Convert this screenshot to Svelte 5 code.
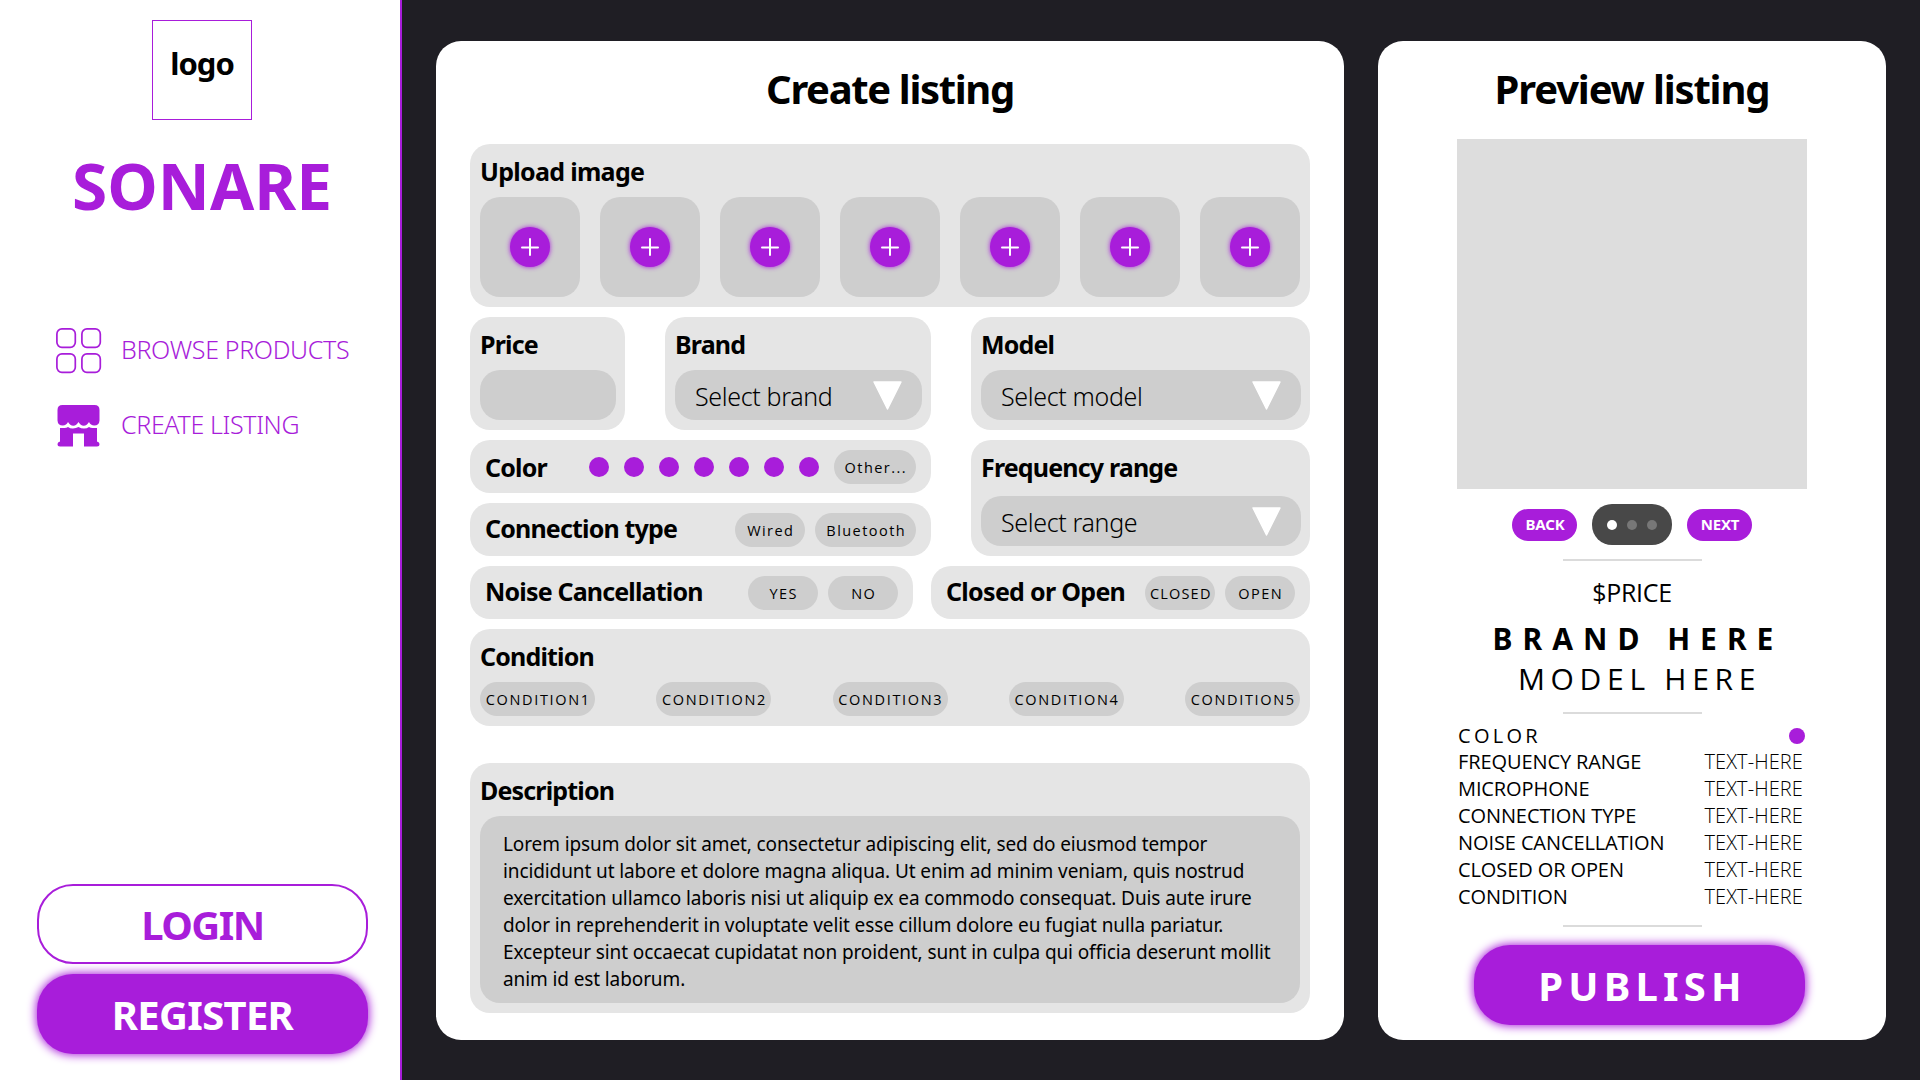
<script>
  const uploads = [1, 2, 3, 4, 5, 6, 7];
  const colors = [1, 2, 3, 4, 5, 6, 7];
  const conditions = ['CONDITION1', 'CONDITION2', 'CONDITION3', 'CONDITION4', 'CONDITION5'];
  const specs = ['FREQUENCY RANGE', 'MICROPHONE', 'CONNECTION TYPE', 'NOISE CANCELLATION', 'CLOSED OR OPEN', 'CONDITION'];
</script>

{#snippet select(text)}
  <div class="field select">
    <span>{text}</span>
    <svg width="29" height="29" viewBox="0 0 29 29"><path d="M1 1H28L14.5 28Z" fill="#fff" stroke="#fff" stroke-width="1.4" stroke-linejoin="round" /></svg>
  </div>
{/snippet}

<div class="page">
  <aside>
    <div class="logo">logo</div>
    <div class="brand-name">SONARE</div>
    <nav>
      <a class="browse" href="#browse">
        <svg width="46" height="46" viewBox="0 0 46 46" fill="none" stroke="#a81dda" stroke-width="1.7">
          <rect x="0.9" y="0.9" width="18.4" height="18.4" rx="5" />
          <rect x="25.9" y="0.9" width="18.4" height="18.4" rx="5" />
          <rect x="0.9" y="25.9" width="18.4" height="18.4" rx="5" />
          <rect x="25.9" y="25.9" width="18.4" height="18.4" rx="5" />
        </svg>
        <span>BROWSE PRODUCTS</span>
      </a>
      <a class="create" href="#create">
        <svg width="46" height="46" viewBox="0 0 46 46" fill="#a81dda">
          <path d="M6.5 2H38.5Q43.5 2 43.5 7V17.5Q43.2 22.5 38.2 22.6Q34.5 22.3 33 19Q31 22.7 27.7 22.7Q24.5 22.7 22.5 19Q20.5 22.7 17.3 22.7Q14 22.7 12 19Q10.5 22.3 6.8 22.6Q1.8 22.5 1.5 17.5V7Q1.5 2 6.5 2Z" />
          <path d="M4 25H8.5Q10.5 25 12 24Q14.5 25.8 17 25.6Q20 25.4 22.5 24Q25 25.6 28 25.6Q31 25.6 33 24Q34.5 25 36.5 25H41V38.500Q43.500 39 43.500 41Q43.500 43.500 41 43.500H28V30.500H17V43.500H4Q1.500 43.500 1.500 41Q1.500 39 4 38.500Z" />
        </svg>
        <span>CREATE LISTING</span>
      </a>
    </nav>
    <div class="auth">
      <button class="big outline">LOGIN</button>
      <button class="big register">REGISTER</button>
    </div>
  </aside>

  <main class="card">
    <h1 class="t-create">Create listing</h1>
    <div class="form">
      <section class="box upload">
        <h2>Upload image</h2>
        <div class="tiles">
          {#each uploads as u (u)}
            <div class="tile">
              <div class="plus">
                <svg width="18" height="18" viewBox="0 0 18 18"><path d="M9 1V17M1 9.500H17" stroke="#fff" stroke-width="2" stroke-linecap="round" /></svg>
              </div>
            </div>
          {/each}
        </div>
      </section>

      <div class="row">
        <section class="box price"><h2>Price</h2><div class="field"></div></section>
        <section class="box brand"><h2>Brand</h2>{@render select('Select brand')}</section>
        <section class="box model"><h2>Model</h2>{@render select('Select model')}</section>
      </div>

      <div class="row">
        <div class="stack">
          <section class="box line color">
            <h2>Color</h2>
            <div class="swatches">{#each colors as c (c)}<i></i>{/each}<span class="pill other">Other...</span></div>
          </section>
          <section class="box line connection">
            <h2>Connection type</h2>
            <div class="pills"><span class="pill">Wired</span><span class="pill bluetooth">Bluetooth</span></div>
          </section>
        </div>
        <section class="box freq"><h2>Frequency range</h2>{@render select('Select range')}</section>
      </div>

      <div class="row tight">
        <section class="box line noise">
          <h2>Noise Cancellation</h2>
          <div class="pills"><span class="pill">YES</span><span class="pill">NO</span></div>
        </section>
        <section class="box line back-type">
          <h2>Closed or Open</h2>
          <div class="pills"><span class="pill closed">CLOSED</span><span class="pill">OPEN</span></div>
        </section>
      </div>

      <section class="box condition">
        <h2>Condition</h2>
        <div class="conditions">{#each conditions as c (c)}<span class="pill wide">{c}</span>{/each}</div>
      </section>

      <section class="box description">
        <h2>Description</h2>
        <p>
          Lorem ipsum dolor sit amet, consectetur adipiscing elit, sed do eiusmod tempor<br />
          incididunt ut labore et dolore magna aliqua. Ut enim ad minim veniam, quis nostrud<br />
          exercitation ullamco laboris nisi ut aliquip ex ea commodo consequat. Duis aute irure<br />
          dolor in reprehenderit in voluptate velit esse cillum dolore eu fugiat nulla pariatur.<br />
          Excepteur sint occaecat cupidatat non proident, sunt in culpa qui officia deserunt mollit<br />
          anim id est laborum.
        </p>
      </section>
    </div>
  </main>

  <section class="card preview">
    <h1 class="t-preview">Preview listing</h1>
    <div class="photo"></div>
    <div class="pager">
      <button>BACK</button>
      <div class="dots"><i class="on"></i><i></i><i></i></div>
      <button>NEXT</button>
    </div>
    <hr />
    <div class="p-price">$PRICE</div>
    <div class="p-brand">BRAND HERE</div>
    <div class="p-model">MODEL HERE</div>
    <hr />
    <dl>
      <div class="p-color"><dt>COLOR</dt><dd><i></i></dd></div>
      {#each specs as s (s)}
        <div><dt>{s}</dt><dd>TEXT-HERE</dd></div>
      {/each}
    </dl>
    <hr />
    <button class="big publish">PUBLISH</button>
  </section>
</div>

<style>
  :global(body) { margin: 0; }
  * { box-sizing: border-box; }
  h1, h2, p, dl, dt, dd { margin: 0; }
  button { border: 0; padding: 0; font-family: inherit; }
  svg { display: block; flex: none; }

  .page {
    display: flex;
    width: 1920px;
    height: 1080px;
    overflow: hidden;
    background: #1f1e24;
    color: #000;
    font-family: "Noto Sans", "Open Sans", sans-serif;
  }

  aside {
    display: flex;
    flex-direction: column;
    align-items: center;
    flex: none;
    width: 402px;
    padding-top: 20px;
    border-right: 2px solid #a81dda;
    background: #fff;
    color: #a81dda;
  }
  .logo {
    width: 100px;
    height: 100px;
    margin-left: 4px;
    padding-top: 21px;
    border: 1px solid #a81dda;
    color: #000;
    font-size: 31px;
    font-weight: 700;
    line-height: 42px;
    letter-spacing: -1px;
    text-align: center;
  }
  .brand-name {
    margin: 22px 0 0 4px;
    font-size: 64px;
    font-weight: 700;
    line-height: 88px;
  }
  nav {
    display: grid;
    gap: 29px;
    width: 100%;
    margin-top: 98px;
    padding-left: 56px;
  }
  nav a {
    display: flex;
    gap: 19px;
    height: 46px;
    color: inherit;
    font-size: 25px;
    font-weight: 300;
    line-height: 42px;
    letter-spacing: -0.35px;
    text-decoration: none;
    white-space: nowrap;
  }
  .auth {
    display: grid;
    gap: 10px;
    margin: auto 0 26px 5px;
  }
  .big {
    width: 331px;
    height: 80px;
    border-radius: 36px;
    font-size: 40px;
    font-weight: 700;
    line-height: 82px;
    text-align: center;
  }
  .outline {
    border: 2px solid #a81dda;
    background: #fff;
    color: #a81dda;
    line-height: 78px;
    letter-spacing: -1.5px;
  }
  .register, .publish {
    background: #a81dda;
    color: #fff;
    box-shadow: 0 0 10px 1px #a81dda;
  }
  .register { letter-spacing: -0.7px; }

  .card {
    flex: none;
    height: 999px;
    margin-top: 41px;
    border-radius: 25px;
    background: #fff;
  }
  main.card {
    width: 908px;
    margin-left: 34px;
    padding: 21px 34px 0;
  }
  h1 {
    font-size: 40px;
    font-weight: 700;
    line-height: 54px;
    text-align: center;
  }
  .t-create { letter-spacing: -1.35px; }
  .t-preview { letter-spacing: -1.15px; }
  h2 {
    height: 33px;
    font-size: 25px;
    font-weight: 700;
    line-height: 35px;
    letter-spacing: -0.83px;
    white-space: nowrap;
  }
  .upload h2, .back-type h2 { letter-spacing: -0.7px; }
  .form { display: grid; gap: 10px; margin-top: 28px; }
  .row { display: flex; gap: 40px; }
  .tight { gap: 18px; }
  .stack { display: grid; gap: 10px; width: 461px; }
  .box {
    padding: 10px;
    border-radius: 20px;
    background: #e5e5e5;
  }
  .upload { height: 163px; }
  .tiles { display: flex; gap: 20px; margin-top: 10px; }
  .tile {
    display: grid;
    place-items: center;
    width: 100px;
    height: 100px;
    border-radius: 20px;
    background: #cecece;
  }
  .plus {
    display: grid;
    place-items: center;
    width: 40px;
    height: 40px;
    border-radius: 50%;
    background: #a81dda;
    box-shadow: 0 0 5px #a81dda;
  }
  .price, .brand, .model { height: 113px; }
  .price { width: 155px; }
  .brand { width: 266px; }
  .model, .freq { width: 339px; }
  .freq { height: 116px; }
  .field {
    height: 50px;
    margin: 10px -1px 0 0;
    border-radius: 20px;
    background: #cecece;
  }
  .freq .field { margin-top: 13px; }
  .select {
    display: flex;
    justify-content: space-between;
    padding: 11px 20px 0;
    font-size: 25px;
    font-weight: 300;
    line-height: 31px;
    letter-spacing: -0.35px;
  }
  .line {
    display: flex;
    justify-content: space-between;
    height: 53px;
    padding: 10px 15px 0;
  }
  .connection h2, .noise h2, .back-type h2 { margin-top: -2px; }
  .swatches { display: flex; gap: 15px; }
  .swatches i {
    width: 20px;
    height: 20px;
    margin-top: 7px;
    border-radius: 50%;
    background: #a81dda;
  }
  .pills { display: flex; gap: 10px; }
  .pill {
    width: 70px;
    height: 34px;
    padding-left: 1.5px;
    border-radius: 17px;
    background: #cecece;
    font: 400 14.5px/35px "Open Sans", sans-serif;
    letter-spacing: 1.45px;
    text-align: center;
    white-space: nowrap;
  }
  .other { width: 82px; }
  .bluetooth { width: 101px; }
  .wide { width: 115px; letter-spacing: 1.65px; }
  .closed { letter-spacing: 1.2px; }
  .noise { width: 443px; }
  .back-type { width: 379px; }
  .condition { height: 97px; }
  .conditions { display: flex; justify-content: space-between; margin-top: 10px; }
  .description { height: 250px; margin-top: 27px; }
  .description p {
    height: 187px;
    margin-top: 10px;
    padding: 15px 0 0 23px;
    border-radius: 20px;
    background: #cecece;
    font-size: 19px;
    line-height: 27px;
    letter-spacing: -0.11px;
    white-space: nowrap;
  }

  .preview {
    display: flex;
    flex-direction: column;
    align-items: center;
    width: 508px;
    margin-left: 34px;
    padding-top: 21px;
  }
  .photo {
    flex: none;
    width: 350px;
    height: 350px;
    margin-top: 23px;
    background: #ddd;
  }
  .pager {
    display: flex;
    align-items: center;
    gap: 15px;
    margin-top: 15px;
  }
  .pager button {
    width: 65px;
    height: 32px;
    padding-left: 1px;
    border-radius: 16px;
    background: #a81dda;
    color: #fff;
    font-size: 15px;
    font-weight: 700;
    line-height: 31px;
    letter-spacing: -0.2px;
  }
  .dots {
    display: flex;
    align-items: center;
    justify-content: center;
    gap: 10px;
    width: 80px;
    height: 41px;
    border-radius: 20px;
    background: #484848;
  }
  .dots i { width: 10px; height: 10px; border-radius: 50%; background: #777; }
  .dots .on { background: #fff; }
  hr {
    flex: none;
    width: 139px;
    height: 2px;
    margin: 14px 0 0;
    border: 0;
    background: #dbdbdb;
  }
  .p-price {
    margin-top: 15px;
    font: 400 25px/33px "Open Sans", sans-serif;
    letter-spacing: -0.3px;
  }
  .p-brand {
    margin-top: 10px;
    padding-left: 12px;
    font-size: 30px;
    font-weight: 700;
    line-height: 40px;
    letter-spacing: 10px;
  }
  .p-model {
    padding-left: 15px;
    font: 400 30px/40px "Open Sans", sans-serif;
    letter-spacing: 5.7px;
  }
  .p-model + hr { margin-top: 13px; }
  dl { width: 350px; margin-top: 8px; }
  dl div {
    display: flex;
    justify-content: space-between;
    padding: 0 4px 0 1px;
    font: 400 20px/27px "Open Sans", sans-serif;
    letter-spacing: -0.1px;
  }
  dl dd { font-weight: 300; letter-spacing: 0.1px; }
  dl .p-color { height: 26px; padding-right: 2px; letter-spacing: 3.3px; }
  dl i { display: block; width: 16px; height: 16px; margin-top: 6px; border-radius: 50%; background: #a81dda; }
  dl + hr { margin-top: 15px; }
  .publish {
    flex: none;
    margin: 18px 0 0 15px;
    padding-left: 6px;
    letter-spacing: 5.2px;
  }
</style>
